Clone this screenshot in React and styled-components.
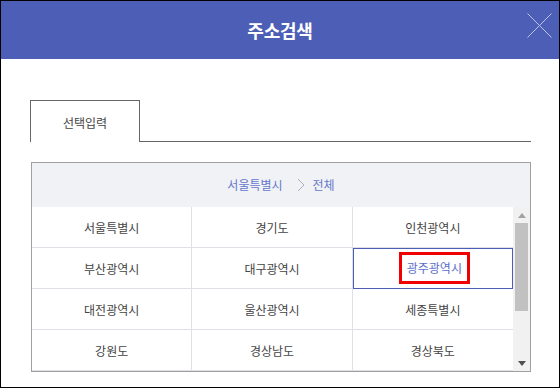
import React from 'react';
import styled, { createGlobalStyle } from 'styled-components';

const GlobalStyle = createGlobalStyle`
  html, body {
    margin: 0;
    padding: 0;
    background: #fff;
  }
  body {
    font-family: "Noto Sans CJK KR", "Noto Sans", sans-serif;
  }
`;

// only the rows that fit in the list box are shown
const regions = [
  '서울특별시', '경기도', '인천광역시',
  '부산광역시', '대구광역시', '광주광역시',
  '대전광역시', '울산광역시', '세종특별시',
  '강원도', '경상남도', '경상북도'
];

const Frame = styled.div`
  box-sizing: border-box;
  width: 560px;
  height: 388px;
  border: 1px solid #000;
  display: flex;
  flex-direction: column;
  overflow: hidden;
`;

const Header = styled.header`
  position: relative;
  height: 58px;
  flex-shrink: 0;
  background: #4c5eb5;
  display: flex;
  align-items: center;
  justify-content: center;
`;

const Title = styled.h1`
  margin: 0;
  color: #fff;
  font-size: 18px;
  font-weight: 700;
  letter-spacing: -0.2px;
`;

const CloseButton = styled.button`
  position: absolute;
  right: 7px;
  top: 12px;
  width: 25px;
  height: 25px;
  padding: 0;
  border: 0;
  background: none;
  cursor: pointer;
  svg {
    display: block;
  }
`;

const Body = styled.div`
  padding: 41px 28px 0 29px;
`;

const TabBar = styled.div`
  display: flex;
  height: 42px;
`;

const Tab = styled.div`
  box-sizing: border-box;
  width: 110px;
  border: 1px solid #666;
  border-bottom: 0;
  display: flex;
  align-items: center;
  justify-content: center;
  font-size: 12px;
  color: #444;
  padding-top: 1px;
`;

const TabFill = styled.div`
  flex: 1;
  border-bottom: 1px solid #666;
`;

const Panel = styled.div`
  margin: 20px 0 0 1px;
  border: 1px solid #a0a0a0;
`;

const Breadcrumb = styled.div`
  height: 44px;
  background: #f0f2f5;
  display: flex;
  align-items: center;
  justify-content: center;
  font-size: 12px;
  color: #6677cc;
  padding-bottom: 1px;
  box-sizing: border-box;
`;

const Chevron = styled.span`
  display: inline-flex;
  margin: 0 8px 0 14px;
  svg {
    display: block;
  }
`;

const ListArea = styled.div`
  display: flex;
  height: 164px;
`;

const Grid = styled.div`
  flex: 1;
  display: grid;
  grid-template-columns: repeat(3, 1fr);
  grid-auto-rows: 41px;
  overflow: hidden;
`;

const Cell = styled.div`
  box-sizing: border-box;
  display: flex;
  align-items: center;
  justify-content: center;
  font-size: 12px;
  color: ${p => (p.$active ? '#5b6ecb' : '#444')};
  border-bottom: 1px solid #dde1e6;
  border-right: ${p => (p.$last ? '0' : '1px solid #dde1e6')};
  outline: ${p => (p.$active ? '1px solid #4c5eb5' : 'none')};
  outline-offset: -1px;
  padding-top: 1px;
`;

const Marked = styled.span`
  box-sizing: border-box;
  display: inline-block;
  border: 3px solid #f00000;
  padding: 0 5px;
  line-height: 26px;
  margin-left: 3px;
  margin-top: -2px;
`;

const ScrollBar = styled.div`
  width: 17px;
  background: #f1f1f1;
  display: flex;
  flex-direction: column;
  align-items: center;
`;

const Arrow = styled.div`
  height: 16px;
  display: flex;
  align-items: center;
  justify-content: center;
  width: 100%;
`;

const Track = styled.div`
  flex: 1;
  width: 100%;
  display: flex;
  flex-direction: column;
  align-items: center;
`;

const Thumb = styled.div`
  width: 13px;
  height: 88px;
  background: #c1c1c1;
`;

const Triangle = ({ down, color }) => (
  <svg width="8" height="5" viewBox="0 0 8 5">
    <polygon points={down ? '0,0 8,0 4,5' : '4,0 8,5 0,5'} fill={color} />
  </svg>
);

export default function App() {
  return (
    <>
      <GlobalStyle />
      <Frame>
        <Header>
          <Title>주소검색</Title>
          <CloseButton aria-label="닫기">
            <svg width="25" height="25" viewBox="0 0 25 25">
              <path d="M0.5 0.5L24.5 24.5M24.5 0.5L0.5 24.5" stroke="#b9c2ea" strokeWidth="1" fill="none" />
            </svg>
          </CloseButton>
        </Header>
        <Body>
          <TabBar>
            <Tab>선택입력</Tab>
            <TabFill />
          </TabBar>
          <Panel>
            <Breadcrumb>
              <span>서울특별시</span>
              <Chevron>
                <svg width="8" height="14" viewBox="0 0 8 14">
                  <path d="M1 1L7 7L1 13" stroke="#aab0bd" strokeWidth="1" fill="none" />
                </svg>
              </Chevron>
              <span>전체</span>
            </Breadcrumb>
            <ListArea>
              <Grid>
                {regions.map((name, i) => (
                  <Cell key={name} $last={i % 3 === 2} $active={name === '광주광역시'}>
                    {name === '광주광역시' ? <Marked>{name}</Marked> : name}
                  </Cell>
                ))}
              </Grid>
              <ScrollBar>
                <Arrow><Triangle color="#a3a3a3" /></Arrow>
                <Track><Thumb /></Track>
                <Arrow><Triangle down color="#505050" /></Arrow>
              </ScrollBar>
            </ListArea>
          </Panel>
        </Body>
      </Frame>
    </>
  );
}
